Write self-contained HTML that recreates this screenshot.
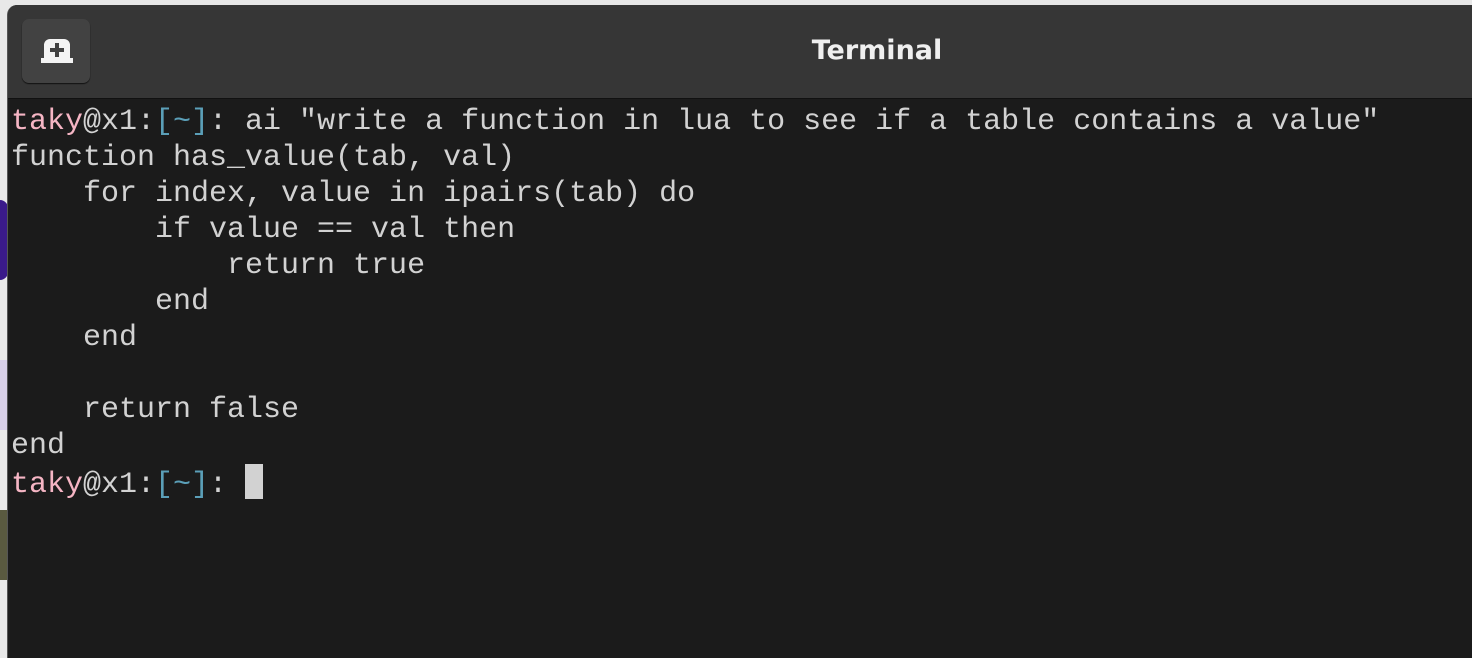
<!DOCTYPE html>
<html><head><style>
html,body{margin:0;padding:0;width:1472px;height:658px;overflow:hidden;background:#e8e8e8;position:relative}
.win{position:absolute;left:7px;top:5px;width:1470px;height:660px;background:#1b1b1b;border-radius:10px 0 0 0;overflow:hidden;border-left:1px solid #555}
.tb{position:absolute;left:0;top:0;right:0;height:93px;background:#363636;border-bottom:1px solid #111}
.btn{position:absolute;left:14px;top:14px;width:68px;height:64px;background:#424242;border-radius:7px;box-shadow:0 1px 1px #111}
.title{position:absolute;left:0;top:30px;text-align:center;font:bold 27px "DejaVu Sans","Liberation Sans",sans-serif;color:#f0f0f0;width:1738px}
pre{position:absolute;left:3px;top:99px;margin:0;font:30px/36px "Liberation Mono","DejaVu Sans Mono",monospace;color:#d2d2d2;letter-spacing:0}
.p{color:#f5b5c4}.c{color:#5b9fb8}
.cur{display:inline-block;width:18px;height:35px;background:#d2d2d2;vertical-align:-7px}
</style></head><body>
<div style="position:absolute;left:0;top:200px;width:8px;height:80px;background:#3a1a8a;border-radius:0 40px 40px 0"></div>
<div style="position:absolute;left:0;top:360px;width:8px;height:70px;background:#d8d0e8"></div>
<div style="position:absolute;left:0;top:510px;width:8px;height:70px;background:#5a5a40"></div>
<div class="win">
<div class="tb">
<div class="btn"><svg width="68" height="64" viewBox="0 0 68 64"><path d="M22 39 V26 a6 6 0 0 1 6-6 h14 a6 6 0 0 1 6 6 V39 h3 v5 h-32 v-5z" fill="#f4f4f4"/><path d="M35 24v14M28 31h14" stroke="#424242" stroke-width="4"/></svg></div>
<div class="title">Terminal</div>
</div>
<pre><span class="p">taky</span>@x1:<span class="c">[~]</span>: ai "write a function in lua to see if a table contains a value"
function has_value(tab, val)
    for index, value in ipairs(tab) do
        if value == val then
            return true
        end
    end

    return false
end
<span class="p">taky</span>@x1:<span class="c">[~]</span>: <span class="cur"></span></pre>
</div>
</body></html>
